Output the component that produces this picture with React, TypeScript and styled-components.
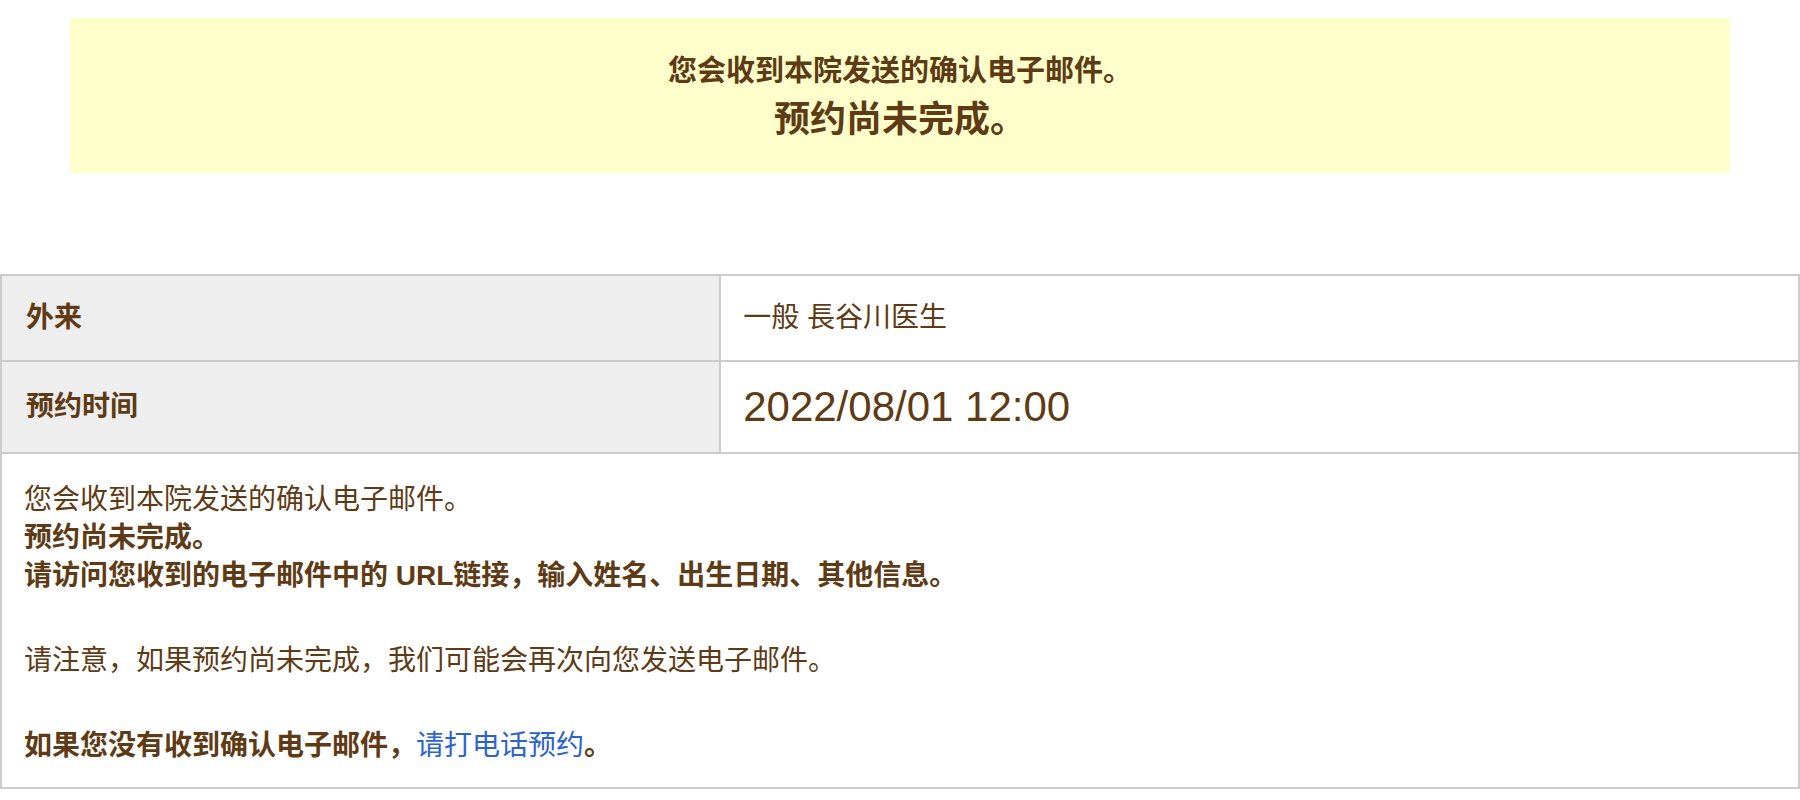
import styled, { createGlobalStyle } from 'styled-components'

const GlobalStyle = createGlobalStyle`
  html, body {
    margin: 0;
    padding: 0;
    background: #ffffff;
  }
  body {
    font-family: 'Liberation Sans', 'Noto Sans CJK SC', sans-serif;
    color: #5e3b14;
  }
`

const Notice = styled.div`
  margin: 18px 70px 0;
  padding: 31px 20px 26px;
  background-color: #ffffcc;
  text-align: center;
  font-weight: 700;
`

const NoticeLine = styled.p<{ $big?: boolean }>`
  margin: 0;
  font-size: ${(p) => (p.$big ? '36px' : '29px')};
  line-height: ${(p) => (p.$big ? '54px' : '44px')};
`

const Table = styled.table`
  width: 100%;
  margin-top: 101px;
  border-collapse: collapse;
  border: 2px solid #cccccc;
`

const Th = styled.th`
  width: 40%;
  padding: 21px 24px;
  background-color: #eeeeee;
  border: 2px solid #cccccc;
  text-align: left;
  font-size: 28px;
  line-height: 42px;
  font-weight: 700;
`

const Td = styled.td<{ $large?: boolean }>`
  padding: 21px 22px;
  border: 2px solid #cccccc;
  font-size: ${(p) => (p.$large ? '42px' : '28px')};
  line-height: ${(p) => (p.$large ? '48px' : '42px')};
  font-weight: 400;
`

const MessageCell = styled.td`
  padding: 27px 22px 22px;
  border: 2px solid #cccccc;
  font-size: 28px;
  line-height: 38px;
`

const Paragraph = styled.p`
  margin: 0 0 47px;

  &:last-child {
    margin-bottom: 0;
  }
`

const Strong = styled.strong`
  font-weight: 700;
`

const PhoneLink = styled.a`
  color: #2b63d0;
  text-decoration: none;
  font-weight: 400;
`

export default function App() {
  return (
    <>
      <GlobalStyle />
      <Notice>
        <NoticeLine>您会收到本院发送的确认电子邮件。</NoticeLine>
        <NoticeLine $big>预约尚未完成。</NoticeLine>
      </Notice>
      <Table>
        <tbody>
          <tr>
            <Th>外来</Th>
            <Td>一般 長谷川医生</Td>
          </tr>
          <tr>
            <Th>预约时间</Th>
            <Td $large>2022/08/01 12:00</Td>
          </tr>
          <tr>
            <MessageCell colSpan={2}>
              <Paragraph>
                您会收到本院发送的确认电子邮件。
                <br />
                <Strong>预约尚未完成。</Strong>
                <br />
                <Strong>请访问您收到的电子邮件中的 URL链接，输入姓名、出生日期、其他信息。</Strong>
              </Paragraph>
              <Paragraph>请注意，如果预约尚未完成，我们可能会再次向您发送电子邮件。</Paragraph>
              <Paragraph>
                <Strong>
                  如果您没有收到确认电子邮件，<PhoneLink href="#">请打电话预约</PhoneLink>。
                </Strong>
              </Paragraph>
            </MessageCell>
          </tr>
        </tbody>
      </Table>
    </>
  )
}
